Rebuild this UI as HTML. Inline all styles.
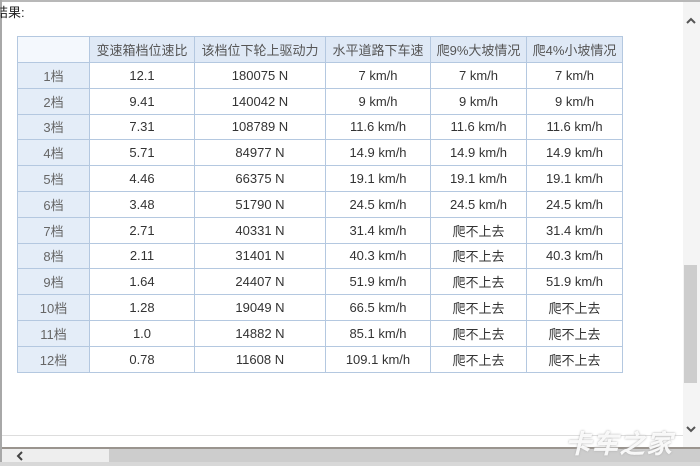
<!DOCTYPE html>
<html><head><meta charset="utf-8"><style>
*{margin:0;padding:0;box-sizing:border-box}
body{width:700px;height:466px;overflow:hidden;background:#fff;position:relative;font-family:"Liberation Sans","Noto Sans CJK SC",sans-serif;color:#333}
.lb{position:absolute;left:0;top:0;width:2px;height:466px;background:#a8a8a8}
.tb{position:absolute;left:0;top:0;width:700px;height:2px;background:#b8b8b8}
.title{position:absolute;left:-5px;top:2px;font-size:13px;color:#222}
table{position:absolute;left:17px;top:36px;border-collapse:collapse;font-size:13px}
td{border:1px solid #b4c8e0;text-align:center;height:25.8px;padding:0;color:#333}
tr:first-child td{background:#dfe9f6;height:26px;color:#555}
tr:first-child td:first-child{background:#f4f8fd}
td:first-child{background:#e4edf8;color:#666}
.vs{position:absolute;left:683px;top:2px;width:17px;height:446px;background:#f4f4f4}
.vt{position:absolute;left:684px;top:265px;width:13px;height:118px;background:#cdcdcd}
.l1{position:absolute;left:2px;top:435px;width:681px;height:1px;background:#ddd}
.l2{position:absolute;left:2px;top:447px;width:698px;height:2px;background:#9a948e}
.hs{position:absolute;left:2px;top:449px;width:698px;height:13px;background:#eeeeee}
.ht{position:absolute;left:109px;top:449px;width:591px;height:13px;background:#cdcdcd}
.bb{position:absolute;left:0;top:462px;width:700px;height:4px;background:#d8d8d8}
.wm{position:absolute;left:565px;top:424px;font-size:26px;font-weight:bold;font-style:italic;color:rgba(255,255,255,.9);text-shadow:0 0 2px #aaa;letter-spacing:1px}
</style></head><body>
<div class="tb"></div><div class="lb"></div>
<div class="title">结果:</div>
<table>
<colgroup><col style="width:72px"><col style="width:105px"><col style="width:131px"><col style="width:105px"><col style="width:96px"><col style="width:96px"></colgroup>
<tr><td></td><td>变速箱档位速比</td><td>该档位下轮上驱动力</td><td>水平道路下车速</td><td>爬9%大坡情况</td><td>爬4%小坡情况</td></tr>
<tr><td>1档</td><td>12.1</td><td>180075 N</td><td>7 km/h</td><td>7 km/h</td><td>7 km/h</td></tr>
<tr><td>2档</td><td>9.41</td><td>140042 N</td><td>9 km/h</td><td>9 km/h</td><td>9 km/h</td></tr>
<tr><td>3档</td><td>7.31</td><td>108789 N</td><td>11.6 km/h</td><td>11.6 km/h</td><td>11.6 km/h</td></tr>
<tr><td>4档</td><td>5.71</td><td>84977 N</td><td>14.9 km/h</td><td>14.9 km/h</td><td>14.9 km/h</td></tr>
<tr><td>5档</td><td>4.46</td><td>66375 N</td><td>19.1 km/h</td><td>19.1 km/h</td><td>19.1 km/h</td></tr>
<tr><td>6档</td><td>3.48</td><td>51790 N</td><td>24.5 km/h</td><td>24.5 km/h</td><td>24.5 km/h</td></tr>
<tr><td>7档</td><td>2.71</td><td>40331 N</td><td>31.4 km/h</td><td>爬不上去</td><td>31.4 km/h</td></tr>
<tr><td>8档</td><td>2.11</td><td>31401 N</td><td>40.3 km/h</td><td>爬不上去</td><td>40.3 km/h</td></tr>
<tr><td>9档</td><td>1.64</td><td>24407 N</td><td>51.9 km/h</td><td>爬不上去</td><td>51.9 km/h</td></tr>
<tr><td>10档</td><td>1.28</td><td>19049 N</td><td>66.5 km/h</td><td>爬不上去</td><td>爬不上去</td></tr>
<tr><td>11档</td><td>1.0</td><td>14882 N</td><td>85.1 km/h</td><td>爬不上去</td><td>爬不上去</td></tr>
<tr><td>12档</td><td>0.78</td><td>11608 N</td><td>109.1 km/h</td><td>爬不上去</td><td>爬不上去</td></tr>
</table>
<div class="vs"></div><div class="vt"></div>
<svg style="position:absolute;left:684px;top:16px" width="14" height="10"><path d="M3 7 L7 3 L11 7" stroke="#555" stroke-width="2" fill="none"/></svg>
<svg style="position:absolute;left:684px;top:424px" width="14" height="10"><path d="M3 3 L7 7 L11 3" stroke="#555" stroke-width="2" fill="none"/></svg>
<div class="l1"></div><div class="l2"></div><div class="hs"></div><div class="ht"></div>
<svg style="position:absolute;left:15px;top:450px" width="10" height="12"><path d="M7 2 L3 6 L7 10" stroke="#444" stroke-width="2" fill="none"/></svg>
<div class="bb"></div>
<div class="wm">卡车之家</div>
</body></html>
